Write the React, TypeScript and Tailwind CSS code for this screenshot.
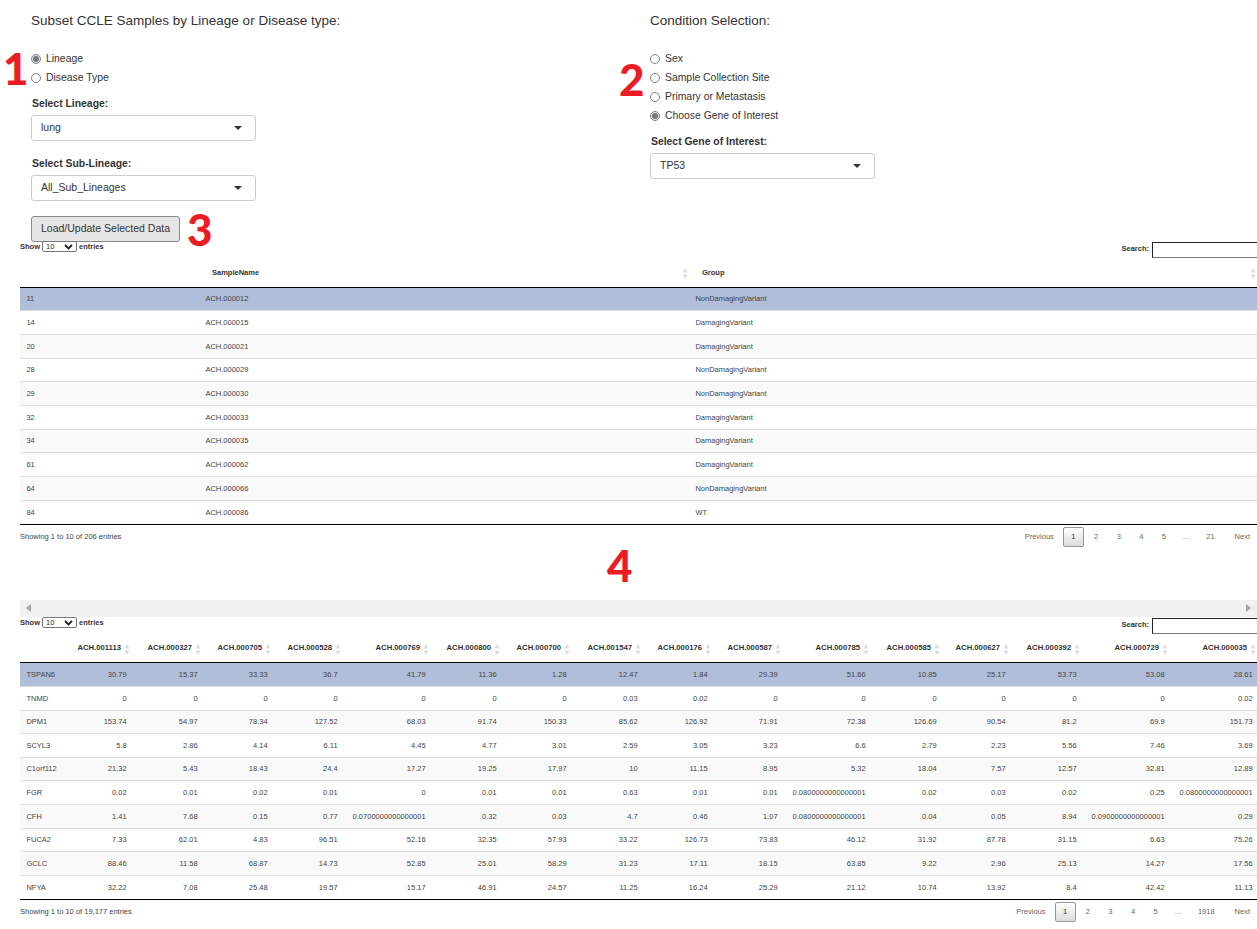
import React from 'react';

const sampleRows = [
  ['11', 'ACH.000012', 'NonDamagingVariant'],
  ['14', 'ACH.000015', 'DamagingVariant'],
  ['20', 'ACH.000021', 'DamagingVariant'],
  ['28', 'ACH.000029', 'NonDamagingVariant'],
  ['29', 'ACH.000030', 'NonDamagingVariant'],
  ['32', 'ACH.000033', 'DamagingVariant'],
  ['34', 'ACH.000035', 'DamagingVariant'],
  ['61', 'ACH.000062', 'DamagingVariant'],
  ['64', 'ACH.000066', 'NonDamagingVariant'],
  ['84', 'ACH.000086', 'WT'],
];

const geneHeaders = ['ACH.001113', 'ACH.000327', 'ACH.000705', 'ACH.000528', 'ACH.000769', 'ACH.000800', 'ACH.000700', 'ACH.001547', 'ACH.000176', 'ACH.000587', 'ACH.000785', 'ACH.000585', 'ACH.000627', 'ACH.000392', 'ACH.000729', 'ACH.000035'];

const geneCols = ['w-[46px]', 'w-[67px]', 'w-[71px]', 'w-[70px]', 'w-[70px]', 'w-[88px]', 'w-[71px]', 'w-[70px]', 'w-[71px]', 'w-[70px]', 'w-[70px]', 'w-[88px]', 'w-[71px]', 'w-[69px]', 'w-[71px]', 'w-[88px]', 'w-[88px]'];

const geneRows = [
  ['TSPAN6', '30.79', '15.37', '33.33', '36.7', '41.79', '11.36', '1.28', '12.47', '1.84', '29.39', '51.66', '10.85', '25.17', '53.73', '53.08', '28.61'],
  ['TNMD', '0', '0', '0', '0', '0', '0', '0', '0.03', '0.02', '0', '0', '0', '0', '0', '0', '0.02'],
  ['DPM1', '153.74', '54.97', '78.34', '127.52', '68.03', '91.74', '150.33', '85.62', '126.92', '71.91', '72.38', '126.69', '90.54', '81.2', '69.9', '151.73'],
  ['SCYL3', '5.8', '2.86', '4.14', '6.11', '4.45', '4.77', '3.01', '2.59', '3.05', '3.23', '6.6', '2.79', '2.23', '5.56', '7.46', '3.69'],
  ['C1orf112', '21.32', '5.43', '18.43', '24.4', '17.27', '19.25', '17.97', '10', '11.15', '8.95', '5.32', '18.04', '7.57', '12.57', '32.81', '12.89'],
  ['FGR', '0.02', '0.01', '0.02', '0.01', '0', '0.01', '0.01', '0.63', '0.01', '0.01', '0.0800000000000001', '0.02', '0.03', '0.02', '0.25', '0.0800000000000001'],
  ['CFH', '1.41', '7.68', '0.15', '0.77', '0.0700000000000001', '0.32', '0.03', '4.7', '0.46', '1.07', '0.0800000000000001', '0.04', '0.05', '8.94', '0.0900000000000001', '0.29'],
  ['FUCA2', '7.33', '62.01', '4.83', '96.51', '52.16', '32.35', '57.93', '33.22', '126.73', '73.83', '46.12', '31.92', '87.78', '31.15', '6.63', '75.26'],
  ['GCLC', '88.46', '11.58', '68.87', '14.73', '52.85', '25.01', '58.29', '31.23', '17.11', '18.15', '63.85', '9.22', '2.96', '25.13', '14.27', '17.56'],
  ['NFYA', '32.22', '7.08', '25.48', '19.57', '15.17', '46.91', '24.57', '11.25', '16.24', '25.29', '21.12', '10.74', '13.92', '8.4', '42.42', '11.13'],
];

const Radio = ({ label, checked }: { label: string; checked?: boolean }) => (
  <div className="flex h-[19px] items-center gap-[4px]">
    <span className={`flex h-[10px] w-[10px] shrink-0 items-center justify-center rounded-full border border-[#808080] ${checked ? 'bg-[#e4e4e4]' : 'bg-white'}`}>
      {checked && <span className="h-[6px] w-[6px] rounded-full bg-[#767676]" />}
    </span>
    <span className="ml-[1px] text-[10.4px] text-[#333]">{label}</span>
  </div>
);

const Dropdown = ({ label, value }: { label: string; value: string }) => (
  <div>
    <div className="mb-[5px] h-[13px] pl-[1px] text-[10.4px] leading-[13px] font-bold text-[#333]">{label}</div>
    <div className="flex h-[26px] w-[225px] items-center justify-between rounded-[3px] border border-[#ccc] bg-white pr-[13px] pl-[9px] text-[10.5px] text-[#333]">
      <span>{value}</span>
      <svg width="8" height="4" viewBox="0 0 8 4"><path d="M0 0h8L4 4z" fill="#333" /></svg>
    </div>
  </div>
);

const SortIcon = () => (
  <svg width="6" height="11" viewBox="0 0 6 11" className="absolute top-[10px]">
    <path d="M3 0l2.6 4.4H.4zM3 11L.4 6.6h5.2z" fill="#dddddd" />
  </svg>
);

const TableControls = () => (
  <div className="flex h-[17px] items-start justify-between text-[7.5px] text-[#333]">
    <div className="flex items-center gap-[2px] font-bold">
      <span>Show</span>
      <span className="flex h-[11px] w-[35px] items-center justify-between rounded-[2px] border border-[#767676] px-[3px] font-normal">
        10
        <svg width="9" height="6" viewBox="0 0 9 6"><path d="M1 1l3.5 3.5L8 1" fill="none" stroke="#222" strokeWidth="1.8" /></svg>
      </span>
      <span>entries</span>
    </div>
    <div className="flex items-start font-bold">
      <span className="mt-[2px] mr-[3px]">Search:</span>
      <span className="mt-[1px] h-[16px] w-[105px] border border-t-[#222] border-r-0 border-b-[#777] border-l-[#222] bg-white" />
    </div>
  </div>
);

const Pagination = ({ last }: { last: string }) => (
  <div className="flex items-center text-[7.5px] text-[#666]">
    <span className="px-[9px]">Previous</span>
    <span className="mr-[1px] flex h-[20px] w-[21px] items-center justify-center rounded-[2px] border border-[#979797] bg-gradient-to-b from-white to-[#dcdcdc] text-[#333]">1</span>
    {['2', '3', '4', '5'].map((p) => (
      <span key={p} className="w-[22.6px] text-center">{p}</span>
    ))}
    <span className="w-[22px] text-center">…</span>
    <span className="px-[9px] text-center">{last}</span>
    <span className="pr-[7px] pl-[11px]">Next</span>
  </div>
);

const rowClass = (i: number) =>
  i === 0 ? 'bg-[#b0bed9]' : i % 2 === 0 ? 'bg-[#f9f9f9]' : 'bg-white';

export default function App() {
  return (
    <div className="relative h-[929px] w-[1257px] overflow-hidden bg-white font-['Liberation_Sans',Arial,sans-serif] text-[#333]">
      <span className="absolute top-[38px] left-[3px] font-['Lato',sans-serif] text-[44px] leading-[60px] font-black text-[#ed1c24]">1</span>
      <span className="absolute top-[49px] left-[619px] font-['Lato',sans-serif] text-[44px] leading-[60px] font-black text-[#ed1c24]">2</span>
      <span className="absolute top-[199px] left-[187px] font-['Lato',sans-serif] text-[44px] leading-[60px] font-black text-[#ed1c24]">3</span>
      <span className="absolute top-[535px] left-[607px] font-['Lato',sans-serif] text-[44px] leading-[60px] font-black text-[#ed1c24]">4</span>

      <div className="flex h-[241px]">
        <div className="w-[650px] pl-[31px]">
          <h3 className="h-[49px] pt-[13px] text-[13.5px] leading-[16px] font-normal">Subset CCLE Samples by Lineage or Disease type:</h3>
          <Radio label="Lineage" checked />
          <Radio label="Disease Type" />
          <div className="mt-[10px] flex flex-col gap-[16px]">
            <Dropdown label="Select Lineage:" value="lung" />
            <Dropdown label="Select Sub-Lineage:" value="All_Sub_Lineages" />
          </div>
          <button className="mt-[15px] h-[26px] w-[149px] rounded-[3px] border border-[#8a8a8a] bg-[#e6e6e6] text-[10.5px] text-[#333]">Load/Update Selected Data</button>
        </div>
        <div>
          <h3 className="h-[49px] pt-[13px] text-[13.5px] leading-[16px] font-normal">Condition Selection:</h3>
          <Radio label="Sex" />
          <Radio label="Sample Collection Site" />
          <Radio label="Primary or Metastasis" />
          <Radio label="Choose Gene of Interest" checked />
          <div className="mt-[10px]">
            <Dropdown label="Select Gene of Interest:" value="TP53" />
          </div>
        </div>
      </div>

      <div className="pl-[20px]">
        <TableControls />
        <table className="w-[1237px] table-fixed border-collapse text-[7.5px]">
          <colgroup>
            <col className="w-[179px]" />
            <col className="w-[490px]" />
            <col className="w-[568px]" />
          </colgroup>
          <thead>
            <tr className="h-[29px] border-b border-black">
              <th />
              <th className="relative pt-[1px] pl-[13px] text-left font-bold">SampleName<span className="absolute top-0 right-[7px]"><SortIcon /></span></th>
              <th className="relative pt-[1px] pl-[13px] text-left font-bold">Group<span className="absolute top-0 right-[7px]"><SortIcon /></span></th>
            </tr>
          </thead>
          <tbody>
            {sampleRows.map((r, i) => (
              <tr key={r[0]} className={`h-[23.7px] border-t border-[#ddd] first:border-t-0 ${rowClass(i)}`}>
                {r.map((c) => (
                  <td key={c} className="px-[6.4px] text-[#444]">{c}</td>
                ))}
              </tr>
            ))}
          </tbody>
        </table>
        <div className="flex h-[76px] justify-between border-t border-black pt-[2px]">
          <span className="mt-[4px] text-[7.5px] text-[#444]">Showing 1 to 10 of 206 entries</span>
          <div className="h-[20px]"><Pagination last="21" /></div>
        </div>
      </div>

      <div className="ml-[20px] flex h-[17px] items-center justify-between bg-[#f1f1f1] px-[6px]">
        <svg width="5" height="8" viewBox="0 0 5 8"><path d="M5 0v8L0 4z" fill="#a3a3a3" /></svg>
        <svg width="5" height="8" viewBox="0 0 5 8"><path d="M0 0v8l5-4z" fill="#a3a3a3" /></svg>
      </div>

      <div className="pl-[20px]">
        <TableControls />
        <table className="w-[1239px] table-fixed border-collapse text-[7.5px]">
          <colgroup>
            {geneCols.map((w, i) => (
              <col key={i} className={w} />
            ))}
          </colgroup>
          <thead>
            <tr className="h-[29px] border-b border-black">
              <th />
              {geneHeaders.map((h) => (
                <th key={h} className="relative pr-[12px] text-right text-[7.7px] font-bold">{h}<span className="absolute top-0 right-[9px]"><SortIcon /></span></th>
              ))}
            </tr>
          </thead>
          <tbody>
            {geneRows.map((r, i) => (
              <tr key={r[0]} className={`h-[23.6px] border-t border-[#ddd] first:border-t-0 ${rowClass(i)}`}>
                {r.map((c, j) => (
                  <td key={j} className={`px-[6.4px] whitespace-nowrap text-[#444] ${j === 0 ? 'text-left' : 'text-right'}`}>{c}</td>
                ))}
              </tr>
            ))}
          </tbody>
        </table>
        <div className="flex justify-between border-t border-black pt-[2px]">
          <span className="mt-[4px] text-[7.5px] text-[#444]">Showing 1 to 10 of 19,177 entries</span>
          <Pagination last="1918" />
        </div>
      </div>
    </div>
  );
}
